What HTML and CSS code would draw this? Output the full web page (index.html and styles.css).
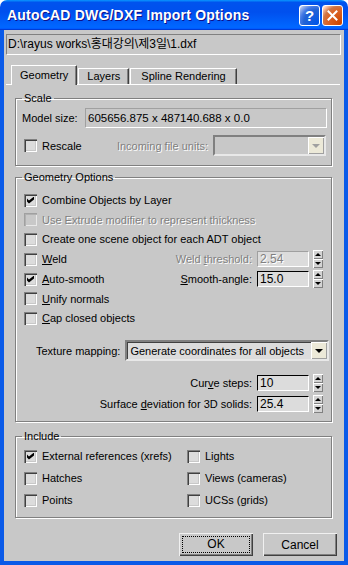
FILE: index.html
```html
<!DOCTYPE html>
<html lang="en">

<head>
  <meta charset="UTF-8">
  <meta name="viewport" content="width=device-width, initial-scale=1.0">
  <title>AutoCAD DWG/DXF Import Options</title>
  <link rel="stylesheet" href="styles.css">
</head>

<body>
  <div class="window">
    <div class="titlebar">
      <span class="title">AutoCAD DWG/DXF Import Options</span>
      <div class="title-buttons">
        <div class="tbtn help">?</div>
        <div class="tbtn close">
          <svg width="11" height="11" viewBox="0 0 11 11">
            <path d="M1.5 1.5 L9.5 9.5 M9.5 1.5 L1.5 9.5" stroke="#fff" stroke-width="2" stroke-linecap="square" />
          </svg>
        </div>
      </div>
    </div>

    <div class="client">
      <div class="path">D:\rayus works\홍대강의\제3일\1.dxf</div>

      <div class="tabstrip">
        <div class="tab active">Geometry</div>
        <div class="tab">Layers</div>
        <div class="tab wide">Spline Rendering</div>
      </div>

      <fieldset class="group scale">
        <legend>Scale</legend>
        <div class="row model-row">
          <span class="label model-label">Model size:</span>
          <div class="readonly">605656.875 x 487140.688 x 0.0</div>
        </div>
        <div class="row rescale-row">
          <label class="check"><span class="box"></span><span>Rescale</span></label>
          <span class="label disabled units-label">Incoming file units:</span>
          <div class="combo disabled units-combo"><span class="drop"></span></div>
        </div>
      </fieldset>

      <fieldset class="group geom">
        <legend>Geometry Options</legend>
        <div class="row check-row">
          <label class="check"><span class="box checked"></span><span>Combine Objects by Layer</span></label>
        </div>
        <div class="row check-row short">
          <label class="check disabled"><span class="box"></span><span>Use Extrude modifier to represent thickness</span></label>
        </div>
        <div class="row check-row">
          <label class="check"><span class="box"></span><span>Create one scene object for each ADT object</span></label>
        </div>
        <div class="row check-row">
          <label class="check"><span class="box"></span><span><u>W</u>eld</span></label>
          <span class="label disabled right">Weld <u>t</u>hreshold:</span>
          <div class="spinfield disabled">2.54</div>
          <div class="spin"><span class="up"></span><span class="down"></span></div>
        </div>
        <div class="row check-row">
          <label class="check"><span class="box checked"></span><span><u>A</u>uto-smooth</span></label>
          <span class="label right"><u>S</u>mooth-angle:</span>
          <div class="spinfield">15.0</div>
          <div class="spin"><span class="up"></span><span class="down"></span></div>
        </div>
        <div class="row check-row short">
          <label class="check"><span class="box"></span><span><u>U</u>nify normals</span></label>
        </div>
        <div class="row check-row">
          <label class="check"><span class="box"></span><span><u>C</u>ap closed objects</span></label>
        </div>
        <div class="row texture-row">
          <span class="label">Texture mapping:</span>
          <div class="combo texture-combo"><span class="combo-text">Generate coordinates for all objects</span><span class="drop"></span></div>
        </div>
        <div class="row spin-row curve">
          <span class="label">Cur<u>v</u>e steps:</span>
          <div class="spinfield">10</div>
          <div class="spin"><span class="up"></span><span class="down"></span></div>
        </div>
        <div class="row spin-row surface">
          <span class="label">Surface <u>d</u>eviation for 3D solids:</span>
          <div class="spinfield">25.4</div>
          <div class="spin"><span class="up"></span><span class="down"></span></div>
        </div>
      </fieldset>

      <fieldset class="group include">
        <legend>Include</legend>
        <div class="include-grid">
          <label class="check"><span class="box checked"></span><span>External references (xrefs)</span></label>
          <label class="check"><span class="box"></span><span>Lights</span></label>
          <label class="check"><span class="box"></span><span>Hatches</span></label>
          <label class="check"><span class="box"></span><span>Views (cameras)</span></label>
          <label class="check"><span class="box"></span><span>Points</span></label>
          <label class="check"><span class="box"></span><span>UCSs (grids)</span></label>
        </div>
      </fieldset>

      <div class="actions">
        <div class="button default"><span class="focus">OK</span></div>
        <div class="button">Cancel</div>
      </div>
    </div>
  </div>
</body>

</html>
```

FILE: styles.css
```css
* {
  padding: 0;
  margin: 0;
  border: 0;
  box-sizing: border-box;
}

body {
  background: #fff;
  font-family: "Liberation Sans", "Noto Sans CJK KR", sans-serif;
  font-size: 11px;
  color: #000;
}

.window {
  width: 348px;
  height: 565px;
  display: flex;
  flex-direction: column;
}

/* title bar */

.titlebar {
  height: 30px;
  flex: none;
  display: flex;
  align-items: center;
  padding-left: 7px;
  border-radius: 7px 7px 0 0;
  background: linear-gradient(180deg, #0997ff, #0053ee 8%, #0050ee 40%, #0066ff 88%, #0066ff 93%, #005bff 95%, #003dd7 96%, #003dd7);
}

.title {
  color: #fff;
  font-weight: bold;
  font-size: 14px;
  letter-spacing: 0.2px;
  text-shadow: 1px 1px #0f1089;
  flex: 1;
}

.title-buttons {
  display: flex;
  gap: 2px;
  margin-right: 5px;
  margin-top: 1px;
}

.tbtn {
  width: 21px;
  height: 21px;
  border: 1px solid #fff;
  border-radius: 3px;
  display: flex;
  align-items: center;
  justify-content: center;
  color: #fff;
  font-weight: bold;
  font-size: 15px;
}

.tbtn.help {
  background: radial-gradient(circle at 90% 90%, #0054e9 0%, #2263d5 55%, #4479e4 70%, #a3bbec 90%, #fff 100%);
}

.tbtn.close {
  background: radial-gradient(circle at 90% 90%, #cc4600 0%, #dc6527 55%, #cd7546 70%, #ffccb2 90%, #fff 100%);
}

/* client area */

.client {
  flex: 1;
  background: #c8c8c8;
  border: 4px solid #0a5ae8;
  border-top: 0;
  display: flex;
  flex-direction: column;
}

.path {
  height: 21px;
  margin: 4px 3px 0 2px;
  padding-left: 1px;
  line-height: 19px;
  font-size: 12px;
  border: 1px solid #fff;
  border-top-color: #808080;
  border-left-color: #808080;
}

.tabstrip {
  display: flex;
  align-items: flex-end;
  height: 20px;
  margin: 10px 4px 0 2px;
  padding-left: 5px;
  border-bottom: 1px solid #fff;
}

.tab {
  height: 16px;
  line-height: 15px;
  padding: 0 8px;
  border-top: 1px solid #fff;
  border-left: 1px solid #fff;
  border-right: 1px solid #404040;
  box-shadow: inset -1px 0 #808080;
  margin-right: 1px;
}

.tab.wide {
  padding: 0 10px;
}

.tab.active {
  height: 20px;
  line-height: 18px;
  margin-bottom: -1px;
  background: #c8c8c8;
}

/* group boxes */

.group {
  width: 317px;
  margin-left: 11px;
  border: 1px solid #808080;
  box-shadow: inset 1px 1px #fff, 1px 1px #fff;
  padding: 0;
}

.group legend {
  margin-left: 6px;
  padding: 0 2px;
  line-height: 14px;
}

.scale {
  margin-top: 6px;
  padding-bottom: 9px;
}

.geom {
  margin-top: 4px;
  padding-bottom: 8px;
}

.include {
  margin-top: 7px;
  padding-bottom: 6px;
}

.row {
  display: flex;
  align-items: center;
}

.label {
  white-space: nowrap;
}

.disabled {
  color: #808080;
  text-shadow: 1px 1px #fff;
}

.model-row {
  height: 20px;
  margin-top: 3px;
  padding-left: 6px;
}

.model-label {
  width: 63px;
}

.readonly {
  width: 242px;
  height: 20px;
  padding-left: 2px;
  line-height: 18px;
  font-size: 11.5px;
  border: 1px solid #fff;
  border-top-color: #a0a0a0;
  border-left-color: #a0a0a0;
}

.rescale-row {
  height: 21px;
  margin-top: 7px;
  padding-left: 8px;
}

.units-label {
  margin-left: auto;
}

.units-combo {
  width: 113px;
  margin: 0 5px 0 5px;
}

/* checkboxes */

.check {
  display: flex;
  align-items: center;
  gap: 5px;
  white-space: nowrap;
}

.box {
  width: 13px;
  height: 13px;
  flex: none;
  background: #dcdcdc;
  box-shadow: inset 1px 1px #808080, inset 2px 2px #404040, inset -1px -1px #fff, inset -2px -2px #c8c8c8;
  position: relative;
}

.check.disabled .box {
  background: #c8c8c8;
  box-shadow: inset 1px 1px #a0a0a0, inset 2px 2px #b0b0b0, inset -1px -1px #e8e8e8;
}

.box.checked::after {
  content: "";
  position: absolute;
  left: 3px;
  top: 3px;
  width: 7px;
  height: 7px;
  background: #000;
  clip-path: polygon(0 28%, 28% 57%, 100% 0, 100% 43%, 28% 100%, 0 71%);
}

.geom .check-row {
  height: 20px;
  padding-left: 8px;
}

.geom .check-row:first-of-type {
  margin-top: 6px;
}

.geom .check-row.short {
  height: 19px;
}

.right {
  margin-left: auto;
}

/* spinners */

.spinfield {
  width: 52px;
  height: 16px;
  margin-left: 5px;
  padding-left: 2px;
  line-height: 14px;
  font-size: 12px;
  background: #dcdcdc;
  border: 1px solid #fff;
  border-top-color: #000;
  border-left-color: #000;
}

.spinfield.disabled {
  border-top-color: #a0a0a0;
  border-left-color: #a0a0a0;
}

.spin {
  width: 10px;
  height: 18px;
  margin: 0 8px 0 4px;
  display: flex;
  flex-direction: column;
}

.spin span {
  flex: 1;
  position: relative;
  box-shadow: inset 1px 1px #fff, inset -1px -1px #808080;
  background: #d4d4d4;
}

.spin span::after {
  content: "";
  position: absolute;
  left: 2px;
  border-left: 3px solid transparent;
  border-right: 3px solid transparent;
}

.spin .up::after {
  top: 3px;
  border-bottom: 3px solid #000;
}

.spin .down::after {
  top: 3px;
  border-top: 3px solid #000;
}

/* combos */

.combo {
  height: 21px;
  display: flex;
  align-items: center;
  padding-left: 3px;
  border: 2px solid #808080;
  border-right-color: #e8e8e8;
  border-bottom-color: #e8e8e8;
  box-shadow: inset 1px 1px #404040;
  background: #dcdcdc;
}

.combo-text {
  white-space: nowrap;
  font-size: 11px;
}

.combo.disabled {
  background: #c8c8c8;
  box-shadow: none;
}

.drop {
  width: 16px;
  height: 17px;
  margin-left: auto;
  position: relative;
  background: #ece9d8;
  box-shadow: inset 1px 1px #fff, inset -1px -1px #a0a0a0;
}

.drop::after {
  content: "";
  position: absolute;
  left: 4px;
  top: 7px;
  border-left: 4px solid transparent;
  border-right: 4px solid transparent;
  border-top: 4px solid #000;
}

.combo.disabled .drop::after {
  border-top-color: #a0a0a0;
}

.texture-row {
  height: 21px;
  margin-top: 12px;
  padding-left: 20px;
}

.texture-combo {
  width: 204px;
  margin-left: 5px;
}

.spin-row {
  height: 18px;
  justify-content: flex-end;
}

.spin-row.curve {
  margin-top: 13px;
}

.spin-row.surface {
  margin-top: 3px;
}

/* include */

.include-grid {
  display: grid;
  grid-template-columns: 163px 1fr;
  grid-auto-rows: 22px;
  align-items: center;
  margin-top: 2px;
  padding-left: 8px;
}

/* buttons */

.actions {
  display: flex;
  justify-content: flex-end;
  gap: 10px;
  margin: 15px 7px 0 0;
}

.button {
  width: 74px;
  height: 23px;
  display: flex;
  align-items: center;
  justify-content: center;
  font-size: 12px;
  box-shadow: inset 1px 1px #f0f0f0, inset -1px -1px #404040, inset -2px -2px #808080;
}

.button .focus {
  width: 68px;
  height: 17px;
  line-height: 15px;
  text-align: center;
  border: 1px dotted #000;
}
```
